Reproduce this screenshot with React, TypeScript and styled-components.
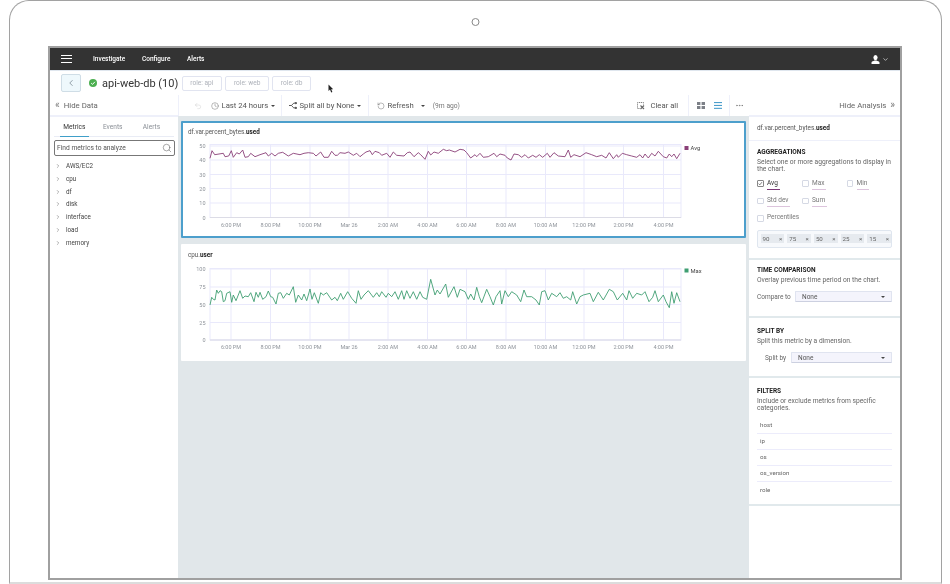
import React from 'react';
import styled, { createGlobalStyle } from 'styled-components';
import { ChevronDown, ChevronLeft, ChevronRight, Clock, MoreHorizontal, RotateCcw, Search, Undo2 } from 'lucide-react';

type Pt = [number, number];

const GlobalStyle = createGlobalStyle`
	html, body {
		margin: 0;
		padding: 0;
		background: #fff;
		overflow: hidden;
		font-family: Roboto, "Liberation Sans", sans-serif;
		color: #444;
	}
	* { box-sizing: border-box; }
`;

const Laptop = styled.div`
	margin: 0 8px 0 9px;
	height: 584px;
	border: 1px solid #a2a2a2;
	border-bottom: 2px solid #dcdcdc;
	border-radius: 20px 20px 0 0;
	padding: 17px 39px 0 38px;
	filter: blur(0.3px);
`;
const Camera = styled.div`
	width: 8px;
	height: 8px;
	margin: 0 auto 20px;
	border: 1px solid #888;
	border-radius: 50%;
	transform: translateX(0.5px);
`;
const Screen = styled.div`
	position: relative;
	height: 534px;
	border: 2px solid #a0a0a0;
	display: flex;
	flex-direction: column;
	background: #fff;
`;
const TopBar = styled.div`
	height: 23px;
	flex: none;
	background: #333;
	color: #fff;
	display: flex;
	align-items: center;
	padding: 0 11px;
	font-size: 6.5px;
	font-weight: 500;
	border-bottom: 1px solid #dfe6ee;
`;
const Burger = styled.div`
	width: 11px;
	height: 8px;
	margin-right: 21px;
	border-top: 1.5px solid #fff;
	border-bottom: 1.5px solid #fff;
	position: relative;
	&::after {
		content: '';
		position: absolute;
		left: 0;
		right: 0;
		top: 1.75px;
		height: 1.5px;
		background: #fff;
	}
`;
const NavLink = styled.span<{ $w: number }>`
	width: ${(p) => p.$w}px;
`;
const UserBox = styled.div`
	margin-left: auto;
	display: flex;
	align-items: center;
	gap: 2px;
`;
const TitleRow = styled.div`
	height: 24px;
	flex: none;
	display: flex;
	align-items: center;
	padding: 0 0 0 11px;
`;
const BackButton = styled.div`
	width: 20px;
	height: 18px;
	background: #eef8fc;
	border: 1px solid #cfdde6;
	border-radius: 2px;
	display: flex;
	align-items: center;
	justify-content: center;
	color: #5a6a75;
	margin-right: 8px;
`;
const GroupName = styled.div`
	margin-left: 5px;
	font-size: 11px;
	color: #333;
	margin-right: 3.5px;
	white-space: nowrap;
`;
const RoleChip = styled.div`
	height: 15px;
	padding: 0 7.5px;
	margin-right: 3.5px;
	display: flex;
	align-items: center;
	border: 1px solid #e1e4f0;
	border-radius: 2px;
	font-size: 6.6px;
	color: #aeb2ba;
	white-space: nowrap;
`;
const Body = styled.div`
	flex: 1;
	min-height: 0;
	display: grid;
	grid-template-columns: 128px 571px 151px;
`;
const Column = styled.div`
	display: flex;
	flex-direction: column;
	min-height: 0;
`;
const SideHeader = styled.div<{ $right?: boolean }>`
	height: 22px;
	flex: none;
	display: flex;
	align-items: center;
	justify-content: ${(p) => (p.$right ? 'flex-end' : 'flex-start')};
	padding: ${(p) => (p.$right ? '0 5px 0 0' : '0 0 0 5px')};
	font-size: 7.8px;
	color: #666;
	border-bottom: 2px solid #eef0fa;
	gap: 4px;
`;
const Quote = styled.span`
	font-size: 10px;
	line-height: 10px;
	color: #777;
`;
const Tabs = styled.div`
	display: flex;
	margin: 0 4px;
	height: 20px;
	align-items: center;
	font-size: 6.6px;
	color: #8a8f96;
	border-bottom: 1px solid #e9ecf5;
`;
const Tab = styled.div<{ $active?: boolean; $w: number }>`
	width: ${(p) => p.$w}px;
	height: 100%;
	display: flex;
	align-items: center;
	justify-content: center;
	color: ${(p) => (p.$active ? '#333' : '#8a8f96')};
	border-bottom: ${(p) => (p.$active ? '1px solid #3f9fc9' : 'none')};
	margin-right: ${(p) => (p.$active ? '8px' : '0')};
	margin-left: ${(p) => (p.$active ? '6px' : '0')};
	margin-bottom: -1px;
`;
const SearchBox = styled.div`
	margin: 3px 3px 4px 4px;
	height: 15.5px;
	border: 1px solid #777;
	border-radius: 2px;
	display: flex;
	align-items: center;
	justify-content: space-between;
	padding: 0 2px 0 2px;
	font-size: 6.7px;
	color: #555;
`;
const TreeRow = styled.div`
	height: 12.85px;
	display: flex;
	align-items: center;
	font-size: 6.3px;
	color: #444;
	padding-left: 5px;
	gap: 5px;
`;
const Toolbar = styled.div`
	height: 21px;
	flex: none;
	display: flex;
	align-items: center;
	font-size: 7.7px;
	color: #555;
	border-left: 1px solid #eef0fa;
`;
const ToolGroup = styled.div<{ $w: number; $pad?: number; $line?: boolean; $gap?: number }>`
	width: ${(p) => p.$w}px;
	height: 100%;
	flex: none;
	display: flex;
	align-items: center;
	padding-left: ${(p) => p.$pad ?? 0}px;
	gap: ${(p) => p.$gap ?? 2.5}px;
	border-right: ${(p) => (p.$line ? '1px solid #eef0fa' : 'none')};
	white-space: nowrap;
`;
const Spacer = styled.div<{ $w?: number }>`
	flex: ${(p) => (p.$w ? 'none' : '1')};
	width: ${(p) => p.$w ?? 0}px;
`;
const Caret = styled.span<{ $ml?: number }>`
	width: 0;
	height: 0;
	border-left: 2.2px solid transparent;
	border-right: 2.2px solid transparent;
	border-top: 2.6px solid #444;
	margin-left: ${(p) => p.$ml ?? 0}px;
`;
const Ago = styled.span`
	font-size: 6.7px;
	color: #777;
	margin-left: 5px;
`;
const ClearText = styled.span`
	margin-left: 3px;
`;
const ChartArea = styled.div`
	flex: 1;
	background: #e1e7ea;
	padding: 5px 3px;
	display: flex;
	flex-direction: column;
	gap: 6px;
`;
const Card = styled.div<{ $selected?: boolean }>`
	height: 117px;
	flex: none;
	background: #fff;
	border: 2px solid ${(p) => (p.$selected ? '#4d9fcc' : '#fff')};
	border-radius: 1px;
`;
const CardTitle = styled.div`
	height: 10px;
	margin: 4px 0 0 5px;
	line-height: 10px;
	font-size: 6.3px;
	color: #555;
	b {
		color: #222;
		font-weight: 700;
	}
`;
const ChartSvg = styled.svg`
	display: block;
`;
const Tick = styled.text`
	font-family: Roboto, "Liberation Sans", sans-serif;
	font-size: 5.5px;
	fill: #8f949b;
`;
const LegendText = styled.text`
	font-family: Roboto, "Liberation Sans", sans-serif;
	font-size: 5.8px;
	fill: #444;
`;
const AnalysisPanel = styled.div`
	flex: 1;
	background: #fff;
`;
const Section = styled.div<{ $h: number; $top: number; $thin?: boolean }>`
	height: ${(p) => p.$h}px;
	padding: ${(p) => p.$top}px 8px 0;
	border-bottom: ${(p) => (p.$thin ? '1px solid #eef0fa' : '2px solid #e1e9ec')};
`;
const MetricName = styled.div`
	font-size: 6.4px;
	line-height: 10px;
	color: #555;
	b {
		color: #222;
	}
`;
const SectionTitle = styled.div`
	font-size: 6.5px;
	line-height: 9px;
	font-weight: 700;
	color: #222;
	text-transform: uppercase;
`;
const Desc = styled.div`
	margin-top: 1.5px;
	font-size: 6.7px;
	line-height: 7.8px;
	color: #666;
`;
const AggGrid = styled.div`
	display: grid;
	grid-template-columns: 45px 44.5px 1fr;
	grid-auto-rows: 17.5px;
	margin-top: 0.5px;
`;
const AggItem = styled.div`
	display: flex;
	align-items: center;
	gap: 3.5px;
	font-size: 6.5px;
	color: #777;
`;
const CheckBox = styled.span<{ $on?: boolean }>`
	width: 6.5px;
	height: 6.5px;
	flex: none;
	border: 1px solid ${(p) => (p.$on ? '#888' : '#d5d9e4')};
	border-radius: 1px;
	display: flex;
	align-items: center;
	justify-content: center;
`;
const AggLabel = styled.span<{ $line?: string; $dark?: boolean }>`
	color: ${(p) => (p.$dark ? '#333' : '#777')};
	padding-bottom: 2px;
	border-bottom: ${(p) => (p.$line ? `1px solid ${p.$line}` : 'none')};
	position: relative;
	top: ${(p) => (p.$line ? '1px' : '0')};
	padding-right: ${(p) => (p.$line ? '2px' : '0')};
`;
const TagBox = styled.div`
	margin-top: 2.5px;
	height: 18px;
	border: 1px solid #dfe6ef;
	border-radius: 2px;
	background: #f7f9fc;
	display: flex;
	align-items: center;
	padding-left: 2.5px;
	gap: 3px;
`;
const Tag = styled.div`
	width: 23.7px;
	height: 9.5px;
	padding: 0 2px;
	background: #e6eaef;
	display: flex;
	align-items: center;
	justify-content: space-between;
	font-size: 6.2px;
	color: #666;
`;
const SelectRow = styled.div<{ $pl?: number; $mt: number }>`
	display: flex;
	align-items: center;
	justify-content: space-between;
	margin-top: ${(p) => p.$mt}px;
	padding-left: ${(p) => p.$pl ?? 0}px;
	font-size: 6.5px;
	color: #666;
`;
const Select = styled.div<{ $w: number }>`
	width: ${(p) => p.$w}px;
	height: 11.5px;
	flex: none;
	background: #f4f4fc;
	border: 1px solid #e0e4f0;
	border-bottom: 1px solid #ccd0e0;
	border-radius: 1px;
	display: flex;
	align-items: center;
	justify-content: space-between;
	padding: 0 6px;
	color: #555;
`;
const FilterRow = styled.div`
	height: 16px;
	padding-left: 3px;
	display: flex;
	align-items: center;
	font-size: 6.2px;
	color: #666;
	border-bottom: 1px solid #ececfb;
	&:last-child {
		border-bottom: none;
	}
`;
const FilterList = styled.div`
	margin-top: 4.5px;
`;
const Pointer = styled.svg`
	position: absolute;
	left: 278px;
	top: 36px;
`;

const zoomed = (list: Pt[], x0: number, y0: number): Pt[] => list.map(([x, y]) => [x0 + x / 3, y0 + y / 3]);

// traced from the reference, x/y in 3x crop pixels
const avgLeft: Pt[] = [[90,115],[96,92],[104,104],[130,100],[135,110],[146,108],[154,92],[160,112],[170,98],[178,102],[188,90],[195,112],[205,110],[212,100],[225,110],[240,104],[258,98],[265,108],[275,100],[285,108],[295,100],[308,97],[325,108],[340,100],[360,104],[372,100],[385,98],[400,100],[408,108],[422,96],[432,112],[445,112],[455,94],[465,106],[472,106],[480,98],[495,100],[505,96],[520,106],[530,100],[540,110],[550,102],[558,96],[570,92],[577,104],[585,94],[598,98],[605,106],[620,100],[630,112],[640,96],[650,106],[672,108],[682,98],[690,96],[702,110],[715,98],[722,104],[735,118],[745,94],[752,105],[762,96],[775,100],[790,88],[800,92],[808,90]];
const avgRight: Pt[] = [[15,96],[30,88],[42,90],[50,98],[62,114],[75,104],[80,110],[90,100],[100,112],[115,110],[132,100],[140,110],[150,102],[165,106],[172,114],[183,120],[192,102],[205,104],[215,112],[225,104],[235,114],[248,106],[258,112],[268,104],[278,112],[292,100],[300,112],[312,98],[325,108],[345,110],[355,90],[362,112],[372,104],[390,110],[408,98],[425,104],[440,110],[455,106],[468,114],[478,98],[490,116],[500,104],[505,112],[517,100],[530,104],[545,108],[560,112],[570,104],[578,114],[585,102],[595,114],[605,100],[615,108],[625,94],[640,110],[650,114],[658,102],[665,110],[672,102],[680,116],[690,100]];
const maxLeft: Pt[] = [[90,195],[95,172],[100,178],[105,180],[110,150],[115,160],[120,152],[125,155],[130,185],[135,182],[140,160],[150,155],[155,187],[160,165],[168,182],[180,152],[188,175],[195,168],[205,170],[212,158],[222,185],[228,157],[235,172],[240,157],[248,178],[258,170],[265,153],[272,170],[278,172],[288,192],[295,160],[302,158],[310,175],[320,160],[328,165],[340,140],[347,187],[355,165],[365,180],[372,162],[380,182],[390,147],[396,178],[403,158],[415,190],[422,158],[430,165],[440,158],[455,180],[465,172],[472,182],[482,160],[490,178],[503,155],[515,175],[528,190],[535,152],[543,178],[552,165],[565,152],[580,172],[590,158],[598,170],[605,155],[618,172],[625,160],[635,170],[645,155],[655,178],[665,152],[672,178],[680,152],[690,175],[700,155],[710,178],[720,155],[728,172],[740,178],[752,118],[765,165],[772,150],[780,162],[797,132],[805,172]];
const maxRight: Pt[] = [[12,140],[22,172],[30,148],[45,155],[55,178],[62,162],[72,180],[80,142],[88,170],[95,188],[110,148],[120,170],[130,195],[138,170],[150,152],[155,192],[165,152],[175,170],[185,155],[200,165],[212,185],[222,150],[230,170],[245,170],[258,180],[268,195],[275,155],[285,152],[295,180],[305,160],[320,170],[330,158],[340,175],[350,170],[362,180],[368,155],[380,192],[390,170],[400,165],[420,160],[430,185],[445,157],[460,180],[478,148],[490,155],[502,180],[518,160],[530,180],[537,152],[548,175],[560,160],[575,165],[585,155],[597,185],[608,172],[615,152],[625,185],[640,165],[648,185],[658,203],[665,155],[672,190],[680,158],[690,185]];

const avgPoints = [...zoomed(avgLeft, 180, 120), ...zoomed(avgRight, 450, 120)];
const maxPoints = [...zoomed(maxLeft, 180, 240), ...zoomed(maxRight, 450, 240)];

const xTicks: [number, string][] = [
	[231, '6:00 PM'], [270.5, '8:00 PM'], [310, '10:00 PM'], [349, 'Mar 26'], [388, '2:00 AM'], [427.5, '4:00 AM'],
	[466.5, '6:00 AM'], [506, '8:00 AM'], [545.5, '10:00 AM'], [584, '12:00 PM'], [623.5, '2:00 PM'], [663.5, '4:00 PM'],
];

type ChartProps = {
	top: number;
	plotTop: number;
	plotBottom: number;
	yTicks: [number, string][];
	points: Pt[];
	color: string;
	legend: string;
	legendY: number;
};

const SVG_LEFT = 183;
const PLOT_L = 210;
const PLOT_R = 681;

const Chart = ({ top, plotTop, plotBottom, yTicks, points, color, legend, legendY }: ChartProps): JSX.Element => {
	const grid = '#e9e9fb';
	const lx = (x: number) => x - SVG_LEFT;
	const ly = (y: number) => y - top;
	return (
		<ChartSvg width='561' height='99' viewBox='0 0 561 99'>
			<rect x={lx(PLOT_L)} y={ly(plotTop)} width={PLOT_R - PLOT_L} height={plotBottom - plotTop} fill='none' stroke={grid} />
			{yTicks.map(([y, label]) => (
				<g key={label}>
					<line x1={lx(PLOT_L)} x2={lx(PLOT_R)} y1={ly(y)} y2={ly(y)} stroke={grid} />
					<Tick x={lx(205.5)} y={ly(y) + 2} textAnchor='end'>{label}</Tick>
				</g>
			))}
			{xTicks.map(([x, label]) => (
				<g key={label}>
					<line x1={lx(x)} x2={lx(x)} y1={ly(plotTop)} y2={ly(plotBottom)} stroke={grid} />
					<Tick x={lx(x)} y={ly(plotBottom) + 9} textAnchor='middle'>{label}</Tick>
				</g>
			))}
			<line x1={lx(PLOT_L)} x2={lx(PLOT_R)} y1={ly(plotBottom)} y2={ly(plotBottom)} stroke='#dcdce6' />
			<polyline
				points={points.map(([x, y]) => `${lx(x).toFixed(1)},${ly(y).toFixed(1)}`).join(' ')}
				fill='none'
				stroke={color}
				strokeWidth='0.9'
				strokeLinejoin='round'
			/>
			<rect x={lx(684.5)} y={ly(legendY) - 2} width='4' height='4' fill={color} />
			<LegendText x={lx(690.5)} y={ly(legendY) + 2}>{legend}</LegendText>
		</ChartSvg>
	);
};

const SplitIcon = (): JSX.Element => (
	<svg width='8' height='7' viewBox='0 0 10 8' fill='none' stroke='#444' strokeWidth='1.1'>
		<path d='M0 4h3l3-3h2M3 4l3 3h2' />
		<circle cx='8.6' cy='1' r='0.9' fill='#444' />
		<circle cx='8.6' cy='7' r='0.9' fill='#444' />
	</svg>
);

const ClearIcon = (): JSX.Element => (
	<svg width='9' height='9' viewBox='0 0 9 9' fill='none' stroke='#666' strokeWidth='0.8'>
		<path d='M3.5 7.5H1.5V1.5H7.5V3.5' strokeDasharray='1.2 0.7' />
		<path d='M4.5 4.5L8 8M8 4.5L4.5 8' strokeWidth='1.1' />
	</svg>
);

const GridIcon = (): JSX.Element => (
	<svg width='8' height='7' viewBox='0 0 8 7' fill='#7c8087'>
		<rect x='0' y='0' width='3.4' height='3' />
		<rect x='4.6' y='0' width='3.4' height='3' />
		<rect x='0' y='4' width='3.4' height='3' />
		<rect x='4.6' y='4' width='3.4' height='3' />
	</svg>
);

const ListIcon = (): JSX.Element => (
	<svg width='8' height='7' viewBox='0 0 8 7' fill='#4d9fcc'>
		<rect y='0' width='8' height='1.1' />
		<rect y='2.9' width='8' height='1.1' />
		<rect y='5.8' width='8' height='1.1' />
	</svg>
);

const StatusIcon = (): JSX.Element => (
	<svg width='8' height='8' viewBox='0 0 8 8'>
		<circle cx='4' cy='4' r='4' fill='#4caf50' />
		<path d='M2.2 4.1L3.5 5.4L5.9 2.8' fill='none' stroke='#fff' strokeWidth='1' />
	</svg>
);

const UserIcon = (): JSX.Element => (
	<svg width='9' height='9' viewBox='0 0 9 9' fill='#fff'>
		<ellipse cx='4.5' cy='2.6' rx='2.1' ry='2.6' />
		<path d='M0.5 9V7.6C0.5 6.6 2.6 6.2 3.4 5.6H5.6C6.4 6.2 8.5 6.6 8.5 7.6V9Z' />
	</svg>
);

const metrics = ['AWS/EC2', 'cpu', 'df', 'disk', 'interface', 'load', 'memory'];
const percentiles = ['90', '75', '50', '25', '15'];
const filters = ['host', 'ip', 'os', 'os_version', 'role'];

const App = (): JSX.Element => {
	return (
		<>
			<GlobalStyle />
			<Laptop>
				<Camera />
				<Screen>
					<TopBar>
						<Burger />
						<NavLink $w={49}>Investigate</NavLink>
						<NavLink $w={45}>Configure</NavLink>
						<NavLink $w={30}>Alerts</NavLink>
						<UserBox>
							<UserIcon />
							<ChevronDown size={7} strokeWidth={2} />
						</UserBox>
					</TopBar>
					<TitleRow>
						<BackButton>
							<ChevronLeft size={10} strokeWidth={1.5} />
						</BackButton>
						<StatusIcon />
						<GroupName>api-web-db (10)</GroupName>
						<RoleChip>role: api</RoleChip>
						<RoleChip>role: web</RoleChip>
						<RoleChip>role: db</RoleChip>
					</TitleRow>
					<Body>
						<Column>
							<SideHeader>
								<Quote>«</Quote>
								<span>Hide Data</span>
							</SideHeader>
							<Tabs>
								<Tab $active $w={31}>Metrics</Tab>
								<Tab $w={35}>Events</Tab>
								<Tab $w={49}>Alerts</Tab>
							</Tabs>
							<SearchBox>
								<span>Find metrics to analyze</span>
								<Search size={10} strokeWidth={1.2} color='#555' />
							</SearchBox>
							{metrics.map((m) => (
								<TreeRow key={m}>
									<ChevronRight size={6} strokeWidth={1.8} color='#555' />
									<span>{m}</span>
								</TreeRow>
							))}
						</Column>
						<Column>
							<Toolbar>
								<ToolGroup $w={103} $pad={15} $line>
									<Undo2 size={8} strokeWidth={1} color='#bbb' />
									<Spacer $w={4} />
									<Clock size={8} strokeWidth={1.1} color='#444' />
									<span>Last 24 hours</span>
									<Caret />
								</ToolGroup>
								<ToolGroup $w={87} $pad={7} $line>
									<SplitIcon />
									<span>Split all by None</span>
									<Caret />
								</ToolGroup>
								<ToolGroup $w={120} $pad={8}>
									<RotateCcw size={8} strokeWidth={1.1} color='#444' />
									<span>Refresh</span>
									<Caret $ml={5} />
									<Ago>(9m ago)</Ago>
								</ToolGroup>
								<Spacer />
								<ToolGroup $w={53} $line>
									<ClearIcon />
									<ClearText>Clear all</ClearText>
								</ToolGroup>
								<ToolGroup $w={41} $pad={8} $line $gap={9}>
									<GridIcon />
									<ListIcon />
								</ToolGroup>
								<ToolGroup $w={19} $pad={5}>
									<MoreHorizontal size={9} strokeWidth={1.4} color='#666' />
								</ToolGroup>
							</Toolbar>
							<ChartArea>
								<Card $selected>
									<CardTitle>
										df.var.percent_bytes.<b>used</b>
									</CardTitle>
									<Chart
										top={137}
										plotTop={144.5}
										plotBottom={217.5}
										yTicks={[[146, '50'], [160, '40'], [174.5, '30'], [188.5, '20'], [203, '10'], [217.5, '0']]}
										points={avgPoints}
										color='#8a3f78'
										legend='Avg'
										legendY={148}
									/>
								</Card>
								<Card>
									<CardTitle>
										cpu.<b>user</b>
									</CardTitle>
									<Chart
										top={260}
										plotTop={268.5}
										plotBottom={340}
										yTicks={[[269, '100'], [287, '75'], [304.5, '50'], [322.5, '25'], [340, '0']]}
										points={maxPoints}
										color='#3f9e72'
										legend='Max'
										legendY={270.5}
									/>
								</Card>
							</ChartArea>
						</Column>
						<Column>
							<SideHeader $right>
								<span>Hide Analysis</span>
								<Quote>»</Quote>
							</SideHeader>
							<AnalysisPanel>
								<Section $h={24} $top={6} $thin>
									<MetricName>
										df.var.percent_bytes.<b>used</b>
									</MetricName>
								</Section>
								<Section $h={119} $top={7}>
									<SectionTitle>Aggregations</SectionTitle>
									<Desc>Select one or more aggregations to display in the chart.</Desc>
									<AggGrid>
										<AggItem>
											<CheckBox $on>
												<svg width='5' height='5' viewBox='0 0 5 5' fill='none' stroke='#555' strokeWidth='0.8'>
													<path d='M0.6 2.6L2 4L4.4 1' />
												</svg>
											</CheckBox>
											<AggLabel $dark $line='#7d3a78'>Avg</AggLabel>
										</AggItem>
										<AggItem>
											<CheckBox />
											<AggLabel $line='#dcc4dc'>Max</AggLabel>
										</AggItem>
										<AggItem>
											<CheckBox />
											<AggLabel $line='#dcc4dc'>Min</AggLabel>
										</AggItem>
										<AggItem>
											<CheckBox />
											<AggLabel $line='#dcc4dc'>Std dev</AggLabel>
										</AggItem>
										<AggItem>
											<CheckBox />
											<AggLabel $line='#dcc4dc'>Sum</AggLabel>
										</AggItem>
										<span />
										<AggItem>
											<CheckBox />
											<AggLabel>Percentiles</AggLabel>
										</AggItem>
									</AggGrid>
									<TagBox>
										{percentiles.map((t) => (
											<Tag key={t}>
												<span>{t}</span>
												<span>×</span>
											</Tag>
										))}
									</TagBox>
								</Section>
								<Section $h={58} $top={6}>
									<SectionTitle>Time comparison</SectionTitle>
									<Desc>Overlay previous time period on the chart.</Desc>
									<SelectRow $mt={6.5}>
										<span>Compare to</span>
										<Select $w={97}>
											<span>None</span>
											<Caret />
										</Select>
									</SelectRow>
								</Section>
								<Section $h={60} $top={9}>
									<SectionTitle>Split by</SectionTitle>
									<Desc>Split this metric by a dimension.</Desc>
									<SelectRow $mt={6.5} $pl={8}>
										<span>Split by</span>
										<Select $w={101}>
											<span>None</span>
											<Caret />
										</Select>
									</SelectRow>
								</Section>
								<Section $h={128} $top={9}>
									<SectionTitle>Filters</SectionTitle>
									<Desc>Include or exclude metrics from specific categories.</Desc>
									<FilterList>
										{filters.map((f) => (
											<FilterRow key={f}>{f}</FilterRow>
										))}
									</FilterList>
								</Section>
							</AnalysisPanel>
						</Column>
					</Body>
					<Pointer width='6' height='9' viewBox='0 0 6 9' fill='#222'>
						<path d='M0.5 0.5V7L2 5.6L3.2 8.4L4.4 7.9L3.2 5.2H5.2Z' />
					</Pointer>
				</Screen>
			</Laptop>
		</>
	);
};

export default App;
